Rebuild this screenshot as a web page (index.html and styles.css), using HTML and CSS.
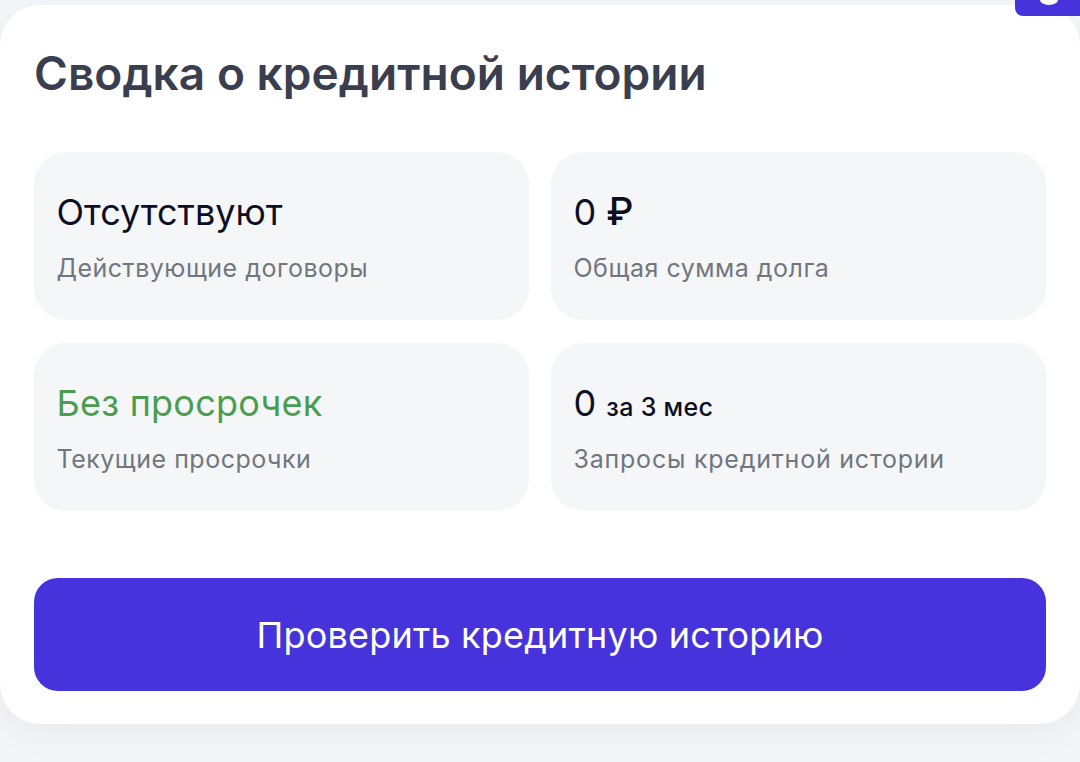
FILE: index.html
```html
<!DOCTYPE html>
<html lang="ru">
<head>
<meta charset="utf-8">
<title>Сводка о кредитной истории</title>
<link rel="stylesheet" href="styles.css">
</head>
<body>
<main class="card">
  <h1 class="title">Сводка о кредитной истории</h1>
  <div class="grid">
    <div class="tile">
      <div class="value">Отсутствуют</div>
      <div class="label">Действующие договоры</div>
    </div>
    <div class="tile">
      <div class="value">0 <span class="currency">₽</span></div>
      <div class="label">Общая сумма долга</div>
    </div>
    <div class="tile">
      <div class="value value-ok">Без просрочек</div>
      <div class="label">Текущие просрочки</div>
    </div>
    <div class="tile">
      <div class="value">0 <span class="value-small">за 3 мес</span></div>
      <div class="label label-wide">Запросы кредитной истории</div>
    </div>
  </div>
  <button class="action" type="button">Проверить кредитную историю</button>
</main>
<div class="badge"><span class="badge-dot"></span></div>
</body>
</html>
```
FILE: styles.css
```css
* { box-sizing: border-box; }
html, body { margin: 0; height: 100%; }
body {
  width: 1080px;
  height: 762px;
  overflow: hidden;
  padding-top: 5px;
  background: #f4f5f8;
  font-family: Inter, "Noto Sans", sans-serif;
  position: relative;
}
.card {
  height: 719px;
  padding: 38px 34px 33px;
  background: #fff;
  border-radius: 40px;
  box-shadow: 0 10px 30px rgba(40, 45, 70, 0.05);
}
.title {
  margin: 0 0 49px;
  font-size: 46px;
  line-height: 60px;
  font-weight: 600;
  letter-spacing: 0.05px;
  color: #3a3f4f;
}
.grid {
  display: grid;
  grid-template-columns: 495px 495px;
  grid-auto-rows: 168px;
  gap: 23px 22px;
}
.tile {
  padding: 37px 23px 0 22.5px;
  background: #f4f6f8;
  border-radius: 32px;
}
.value {
  height: 46px;
  font-size: 36px;
  line-height: 46px;
  color: #0c0e24;
}
.value-ok { color: #4a9d4f; letter-spacing: 0.25px; }
.currency {
  font-size: 38px;
  line-height: 1;
  font-weight: 450;
}
.value-small {
  font-size: 25px;
  line-height: 1;
  font-weight: 450;
  letter-spacing: 0.3px;
}
.label {
  margin-top: 16px;
  font-size: 25px;
  line-height: 34px;
  letter-spacing: 0.5px;
  color: #71767e;
}
.label-wide { letter-spacing: 0.78px; }
.action {
  display: block;
  width: 100%;
  height: 113px;
  margin-top: 67px;
  padding: 0;
  border: 0;
  border-radius: 24px;
  background: #4733dc;
  color: #fff;
  font-family: inherit;
  font-size: 36px;
  letter-spacing: 0.2px;
}
.badge {
  position: absolute;
  top: -8px;
  right: 0;
  width: 65px;
  height: 24px;
  background: #4733dc;
  border-radius: 8px 0 0 8px;
}
.badge-dot {
  position: absolute;
  left: 25px;
  top: 3px;
  width: 18px;
  height: 10px;
  background: #fff;
  border-radius: 50%;
}
```
